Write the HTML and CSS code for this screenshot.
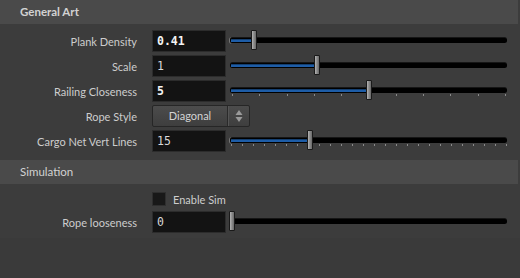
FILE: index.html
```html
<!DOCTYPE html>
<html>
<head>
<meta charset="utf-8">
<link rel="stylesheet" href="styles.css">
</head>
<body>
<div class="panel">
  <div class="section-head bold">General Art</div>
  <div class="rows first">
    <div class="row">
      <label class="lbl">Plank Density</label>
      <div class="field strong">0.41</div>
      <div class="slider capped">
        <div class="track"><div class="fill" style="width:22px"></div></div>
        <div class="handle" style="left:21.5px"></div>
      </div>
    </div>
    <div class="row">
      <label class="lbl">Scale</label>
      <div class="field">1</div>
      <div class="slider">
        <div class="track"><div class="fill" style="width:85px"></div></div>
        <div class="handle" style="left:85px"></div>
      </div>
    </div>
    <div class="row">
      <label class="lbl">Railing Closeness</label>
      <div class="field strong">5</div>
      <div class="slider">
        <div class="track"><div class="fill" style="width:137px"></div></div>
        <div class="ticks ticks-10"></div>
        <div class="handle" style="left:136.5px"></div>
      </div>
    </div>
    <div class="row">
      <label class="lbl">Rope Style</label>
      <div class="select">
        <span class="select-text">Diagonal</span>
        <span class="select-arrows">
          <svg width="8" height="14" viewBox="0 0 8 14"><path d="M4 1 L7.5 6 L0.5 6 Z" fill="#9a9a9a"/><path d="M4 13 L7.5 8 L0.5 8 Z" fill="#9a9a9a"/></svg>
        </span>
      </div>
    </div>
    <div class="row">
      <label class="lbl">Cargo Net Vert Lines</label>
      <div class="field">15</div>
      <div class="slider capped">
        <div class="track"><div class="fill" style="width:78px"></div></div>
        <div class="ticks ticks-25"></div>
        <div class="handle" style="left:77.5px"></div>
      </div>
    </div>
  </div>
  <div class="section-head">Simulation</div>
  <div class="rows second">
    <div class="row check-row">
      <span class="lbl"></span>
      <span class="checkbox"></span>
      <span class="check-text">Enable Sim</span>
    </div>
    <div class="row">
      <label class="lbl">Rope looseness</label>
      <div class="field">0</div>
      <div class="slider">
        <div class="track"></div>
        <div class="handle" style="left:0px"></div>
      </div>
    </div>
  </div>
  <div class="footer"></div>
</div>
</body>
</html>
```

FILE: styles.css
```css
html, body {
  margin: 0;
  padding: 0;
  background: #3c3c3c;
  width: 520px;
  height: 278px;
  overflow: hidden;
}
.panel {
  font-family: "Lato", "Noto Sans", sans-serif;
  font-size: 11px;
  color: #cdcdcd;
  display: flex;
  flex-direction: column;
  width: 520px;
  height: 278px;
}
.section-head {
  height: 24px;
  line-height: 24px;
  background: #4a4a4a;
  margin-right: 2px;
  padding-left: 20px;
  color: #d2d2d2;
  font-size: 11.5px;
}
.section-head.bold { font-weight: bold; }
.rows {
  display: flex;
  flex-direction: column;
  gap: 3px;
}
.rows.first { margin-top: 6px; margin-bottom: 8px; }
.rows.second { margin-top: 8px; gap: 5px; }
.row {
  display: flex;
  height: 22px;
  align-items: center;
}
.lbl {
  width: 137px;
  flex: none;
  margin-right: 15px;
  text-align: right;
  white-space: nowrap;
}
.field {
  flex: none;
  box-sizing: border-box;
  width: 74px;
  height: 22px;
  background: #131313;
  border: 1px solid #2c2c2c;
  font-family: "DejaVu Sans Mono", monospace;
  font-size: 11.5px;
  line-height: 20px;
  padding-left: 4px;
  color: #d8d8d8;
  margin-right: 3px;
}
.field.strong { font-weight: bold; color: #f4f4f4; }
.slider {
  position: relative;
  flex: none;
  height: 22px;
  width: 278px;
}
.track {
  position: absolute;
  left: 1px;
  top: 8px;
  width: 277px;
  height: 5px;
  background: #000;
  border-radius: 2.5px;
  box-shadow: 0 -1px 0 #161616;
}
.slider.capped::before {
  content: "";
  position: absolute;
  left: 0;
  top: 7px;
  width: 3px;
  height: 7px;
  border-left: 1px solid #777;
  border-radius: 3px 0 0 3px;
  box-sizing: border-box;
}
.fill {
  position: absolute;
  left: 1px;
  top: 1px;
  height: 3px;
  background: #1e5da7;
  border-top: 1px solid #143f70;
  box-sizing: border-box;
}
.handle {
  position: absolute;
  top: 0;
  width: 6px;
  height: 20px;
  box-sizing: border-box;
  border: 1px solid #1a1a1a;
  border-radius: 1px;
  background: linear-gradient(to right, #b4b4b4 0%, #8d8d8d 45%, #6a6a6a 100%);
}
.ticks {
  position: absolute;
  top: 14px;
  height: 2px;
  left: 3px;
}
.ticks-10 {
  width: 275px;
  background: repeating-linear-gradient(to right, #8a8a8a 0 1px, transparent 1px 27.3px);
}
.ticks-25 {
  left: 2px;
  width: 277px;
  background: repeating-linear-gradient(to right, #8a8a8a 0 1px, transparent 1px 11px);
}
.select {
  flex: none;
  width: 98px;
  height: 22px;
  box-sizing: border-box;
  border: 1px solid #262626;
  border-radius: 2px;
  background: linear-gradient(#4c4c4c, #3e3e3e);
  display: flex;
  align-items: center;
}
.select-text {
  flex: 1;
  text-align: center;
  color: #d4d4d4;
  border-right: 1px solid #2a2a2a;
  height: 20px;
  line-height: 20px;
  box-shadow: 1px 0 0 #555;
}
.select-arrows {
  width: 21px;
  display: flex;
  justify-content: center;
  align-items: center;
  height: 20px;
}
.select-arrows svg { display: block; }
.check-row { height: 14px; }
.checkbox {
  flex: none;
  width: 14px;
  height: 14px;
  box-sizing: border-box;
  background: #181818;
  border: 1px solid #2e2e2e;
  margin-right: 7px;
}
.footer {
  flex: 1;
  margin-top: 5px;
  background: #3a3a3a;
}
```
